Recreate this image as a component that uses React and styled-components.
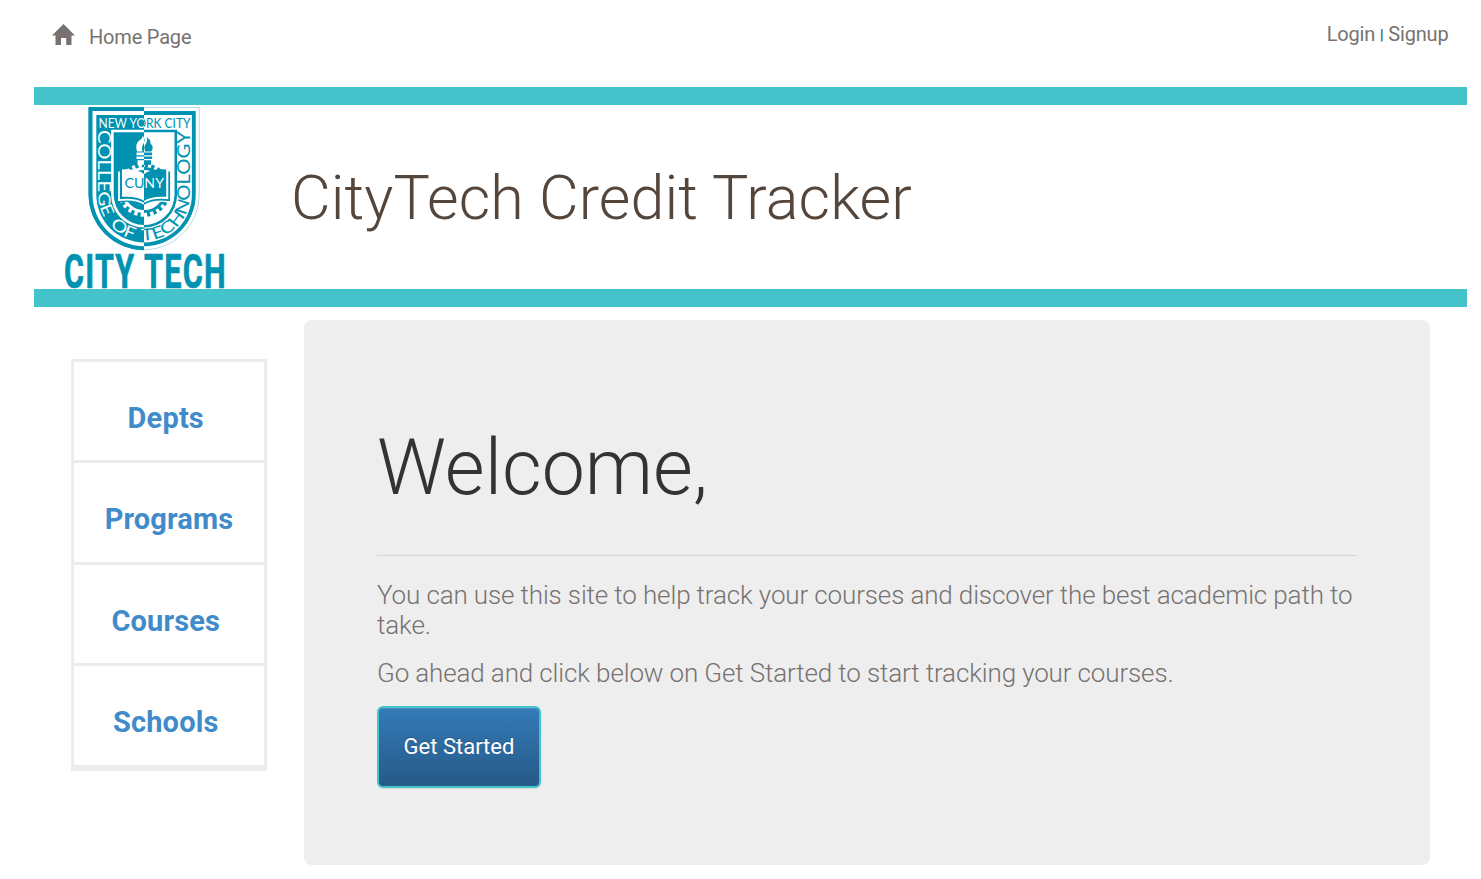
import React from "react";
import styled, { createGlobalStyle } from "styled-components";

const Global = createGlobalStyle`
  * { box-sizing: border-box; }
  body { margin: 0; background: #fff; font-family: Roboto, "Liberation Sans", sans-serif; }
  a { color: inherit; text-decoration: none; }
`;

const Page = styled.div`
  width: 1481px;
  height: 879px;
  padding: 0 14px 0 34px;
  overflow: hidden;
`;

const TopBar = styled.nav`
  display: flex;
  justify-content: space-between;
  height: 87px;
  padding: 24px 18px 0 18px;
  font-size: 20px;
  line-height: 26px;
  letter-spacing: -0.19px;
  color: #777270;
`;

const HomeLink = styled.a`
  display: flex;
  align-items: flex-start;
  gap: 14px;
  svg { display: block; }
`;

const Account = styled.div`
  display: flex;
  gap: 5px;
  margin: -3px 0.5px 0 0;
`;

const Divider = styled.span`
  color: #1d4a75;
  font-size: 14px;
  font-weight: 700;
  line-height: 29px;
`;

const Banner = styled.header`
  display: flex;
  height: 220px;
  border: solid #44c3ca;
  border-width: 18px 0;
`;

const Title = styled.h1`
  margin: 58px 0 0 59px;
  font-size: 61px;
  line-height: 70px;
  font-weight: 300;
  letter-spacing: 0.13px;
  color: #55463c;
`;

const Main = styled.main`
  display: flex;
  align-items: flex-start;
  padding: 13px 37px 0 37px;
`;

const SideNav = styled.ul`
  list-style: none;
  width: 196px;
  margin: 39px 37px 0 0;
  padding: 0;
  border: 3px solid #e9edf0;
`;

const SideItem = styled.li`
  display: flex;
  justify-content: center;
  height: 101.4px;
  padding: 38px ${(p) => (p.$wide ? 0 : 6.5)}px 0 0;
  border-bottom: 3px solid #e9edf0;
  font-size: 29px;
  line-height: 36px;
  font-weight: 700;
  letter-spacing: 0.15px;
  color: #428bca;
`;

const Jumbotron = styled.section`
  width: 1126px;
  flex: none;
  height: 545px;
  padding: 105px 73px 0;
  border-radius: 8px;
  background: #eee;
`;

const Welcome = styled.h2`
  margin: 0;
  font-size: 77px;
  line-height: 86px;
  font-weight: 300;
  color: #333;
`;

const Rule = styled.hr`
  height: 1px;
  margin: 44px 0 24px;
  border: 0;
  background: #d5d5d5;
`;

const Copy = styled.p`
  margin: 0 0 18px;
  font-size: 26px;
  line-height: 30px;
  font-weight: 300;
  letter-spacing: -0.135px;
  color: #777270;
`;

const StartButton = styled.button`
  display: block;
  width: 164px;
  height: 82px;
  padding: 0 0 2px;
  border: 2px solid #44c3ca;
  border-radius: 6px;
  background: linear-gradient(#337ab7, #265a88);
  box-shadow: inset 0 1px 0 rgba(255, 255, 255, 0.15), 0 1px 1px rgba(0, 0, 0, 0.075);
  color: #fff;
  font: 400 22px Roboto, sans-serif;
  text-shadow: 0 -1px 0 rgba(0, 0, 0, 0.2);
`;

const LogoSvg = styled.svg`
  display: block;
  flex: none;
  width: 168px;
  height: 184px;
  margin-left: 30px;
  overflow: visible;
`;

const SealText = styled.text`
  font-family: Lato, sans-serif;
  font-weight: 400;
`;

const WordMark = styled.text`
  font: 700 48.4px Roboto, sans-serif;
  letter-spacing: 2px;
  stroke-width: 0.7px;
`;

const HomeIcon = () => (
  <svg width="23" height="22" viewBox="0 0 23 22">
    <path fill="currentColor" d="M11.5 0 23 11.4h-3.5V21h-5.3v-7H9v7H3.5v-9.6H0z" />
  </svg>
);

const TEAL = "#0092b0";

const shield = (i) => {
  const r = 55.4 - i;
  return `M${144.1 - r} ${107.3 + i}H${144.1 + r}V194.6A${r} ${r} 0 0 1 ${144.1 - r} 194.6Z`;
};

// A two-tone paint that switches colour at the vertical centre of the seal.
const SplitPaint = ({ id, left, right }) => (
  <linearGradient id={id} gradientUnits="userSpaceOnUse" x1="84.1" y1="0" x2="204.1" y2="0">
    <stop offset="0.5" stopColor={left} />
    <stop offset="0.5" stopColor={right} />
  </linearGradient>
);

const INK = "url(#seal-ink)";
const GROUND = "url(#seal-ground)";

const Logo = () => (
  <LogoSvg viewBox="64 105 168 184">
    <defs>
      <path id="seal-ring" d="M98.2 130V194.6A45.9 45.9 0 0 0 190 194.6V130" />
      <SplitPaint id="seal-ink" left="#fff" right={TEAL} />
      <SplitPaint id="seal-ground" left={TEAL} right="#fff" />
      <SplitPaint id="seal-edge" left={TEAL} right="#a9d9e4" />
    </defs>
    <path d={shield(0)} fill={GROUND} />
    <path d={shield(0.2)} fill="none" stroke="url(#seal-edge)" strokeWidth="0.9" />
    <path d={shield(3.8)} fill={INK} />
    <path d={shield(7.6)} fill={GROUND} />
    <path d={shield(22.4)} fill={INK} />
    <path d={shield(25)} fill={GROUND} />
    <SealText x="98.5" y="128.2" fontSize="14.2" fill={INK} textLength="92" lengthAdjust="spacingAndGlyphs">NEW YORK CITY</SealText>
    <SealText fontSize="16.4" wordSpacing="3.5" fill={INK}>
      <textPath href="#seal-ring" textLength="272" lengthAdjust="spacingAndGlyphs">COLLEGE OF TECHNOLOGY</textPath>
    </SealText>
    <circle cx="144.1" cy="190" r="21.5" fill="none" stroke={INK} strokeWidth="3" />
    <circle cx="144.1" cy="190" r="24.6" fill="none" stroke={INK} strokeWidth="4.2" strokeDasharray="3.22 3.22" />
    <path d="M117 171h54.2v31.5q-17-2.5-27.1 3q-10.1-5.5-27.1-3z" fill={GROUND} />
    <path d="M119 171.5v28.6q16-2 25.1 3.6q9.1-5.6 25.1-3.6V171.5" fill="none" stroke={INK} strokeWidth="1.8" />
    <path d="M122 169.5q14-1 22.1 4.5q8.1-5.5 22.1-4.5V196.8q-14-1-22.1 4q-8.1-5-22.1-4z" fill={INK} />
    <SealText x="124.5" y="188.3" fontSize="13.8" fill={GROUND} textLength="39.5" lengthAdjust="spacingAndGlyphs">CUNY</SealText>
    <path d="M136.5 152.6h15.6v2.6h-15.6zM136.5 156.5h15.6v2.4h-15.6zM137.5 160.2h13.6v4.6h-13.6z" fill={INK} />
    <path d="M137 151.5q-2.5-8 3.5-12q2.5-1.5 2-3.8q3.3 3 1.5 7q-3 4-1.5 8.8zM145.2 151.5q-2-5 .8-8q2.2-4 .2-6.6q5.2 2.6 4.2 6.6q4 3 1 8z" fill={INK} />
    <WordMark x="64" y="287.5" fill={TEAL} stroke={TEAL} textLength="71.5" lengthAdjust="spacingAndGlyphs">CITY</WordMark>
    <WordMark x="144" y="287.5" fill={TEAL} stroke={TEAL} textLength="83" lengthAdjust="spacingAndGlyphs">TECH</WordMark>
  </LogoSvg>
);

const sections = ["Depts", "Programs", "Courses", "Schools"];

export default function App() {
  return (
    <Page>
      <Global />
      <TopBar>
        <HomeLink href="#"><HomeIcon />Home Page</HomeLink>
        <Account><a href="#">Login</a><Divider>|</Divider><a href="#">Signup</a></Account>
      </TopBar>
      <Banner>
        <Logo />
        <Title>CityTech Credit Tracker</Title>
      </Banner>
      <Main>
        <SideNav>
          {sections.map((s) => <SideItem key={s} $wide={s === "Programs"}><a href="#">{s}</a></SideItem>)}
        </SideNav>
        <Jumbotron>
          <Welcome>Welcome,</Welcome>
          <Rule />
          <Copy>You can use this site to help track your courses and discover the best academic path to take.</Copy>
          <Copy>Go ahead and click below on Get Started to start tracking your courses.</Copy>
          <StartButton>Get Started</StartButton>
        </Jumbotron>
      </Main>
    </Page>
  );
}
